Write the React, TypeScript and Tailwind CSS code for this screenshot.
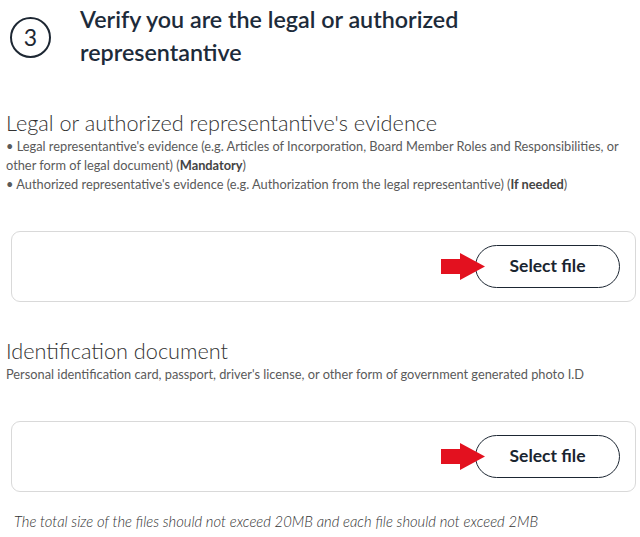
import React from "react";

const Arrow = () => (
  <svg width="44" height="30" viewBox="0 0 44 30" className="block">
    <path d="M0 7 H19 V1 L44 14.5 L19 28 V22 H0 Z" fill="#e3111f" />
  </svg>
);

const UploadBox = () => (
  <div className="ml-[11px] mr-[4px] h-[71px] rounded-[9px] border border-[#d9d9d9] flex items-center justify-end pr-[15px]">
    <div className="flex items-center">
      <div className="-mr-[10px] relative z-20"><Arrow /></div>
      <button className="relative z-10 w-[145px] h-[43px] rounded-full border border-[#1d2733] bg-white text-[17.5px] font-bold text-[#1a2530]">
        Select file
      </button>
    </div>
  </div>
);

export default function App() {
  return (
    <div className="w-[640px] h-[537px] bg-white text-[#333] overflow-hidden" style={{ fontFamily: "Lato, 'Noto Sans', sans-serif" }}>
      <div className="flex items-start pt-[3px]">
        <div className="ml-[10px] mt-[14px] w-[41px] h-[41px] rounded-full border-2 border-[#1d2733] flex items-center justify-center text-[23px] font-normal text-[#1d2733]">
          3
        </div>
        <h1 className="ml-[29px] text-[23.3px] leading-[33px] font-semibold text-[#1d2b3a]">
          Verify you are the legal or authorized<br />representantive
        </h1>
      </div>
      <h2 className="mt-[41px] ml-[6px] text-[21.7px] leading-[26px] font-light text-[#333]">
        Legal or authorized representantive's evidence
      </h2>
      <div className="ml-[6px] mt-[1px] text-[12.8px] leading-[19px] text-[#5a5a5a] pr-[14px]">
        <p>• Legal representantive's evidence (e.g. Articles of Incorporation, Board Member Roles and Responsibilities, or other form of legal document) (<span className="font-bold text-[#444]">Mandatory</span>)</p>
        <p>• Authorized representative's evidence (e.g. Authorization from the legal representantive) (<span className="font-bold text-[#444]">If needed</span>)</p>
      </div>
      <div className="mt-[37px]"><UploadBox /></div>
      <h2 className="mt-[36px] ml-[6px] text-[21.7px] leading-[26px] font-light text-[#333]">
        Identification document
      </h2>
      <p className="ml-[6px] mt-[1px] text-[12.8px] leading-[19px] text-[#5a5a5a]">
        Personal identification card, passport, driver's license, or other form of government generated photo I.D
      </p>
      <div className="mt-[37px]"><UploadBox /></div>
      <p className="mt-[19px] ml-[14px] text-[14.8px] leading-[20px] italic font-light text-[#333]">
        The total size of the files should not exceed 20MB and each file should not exceed 2MB
      </p>
    </div>
  );
}
